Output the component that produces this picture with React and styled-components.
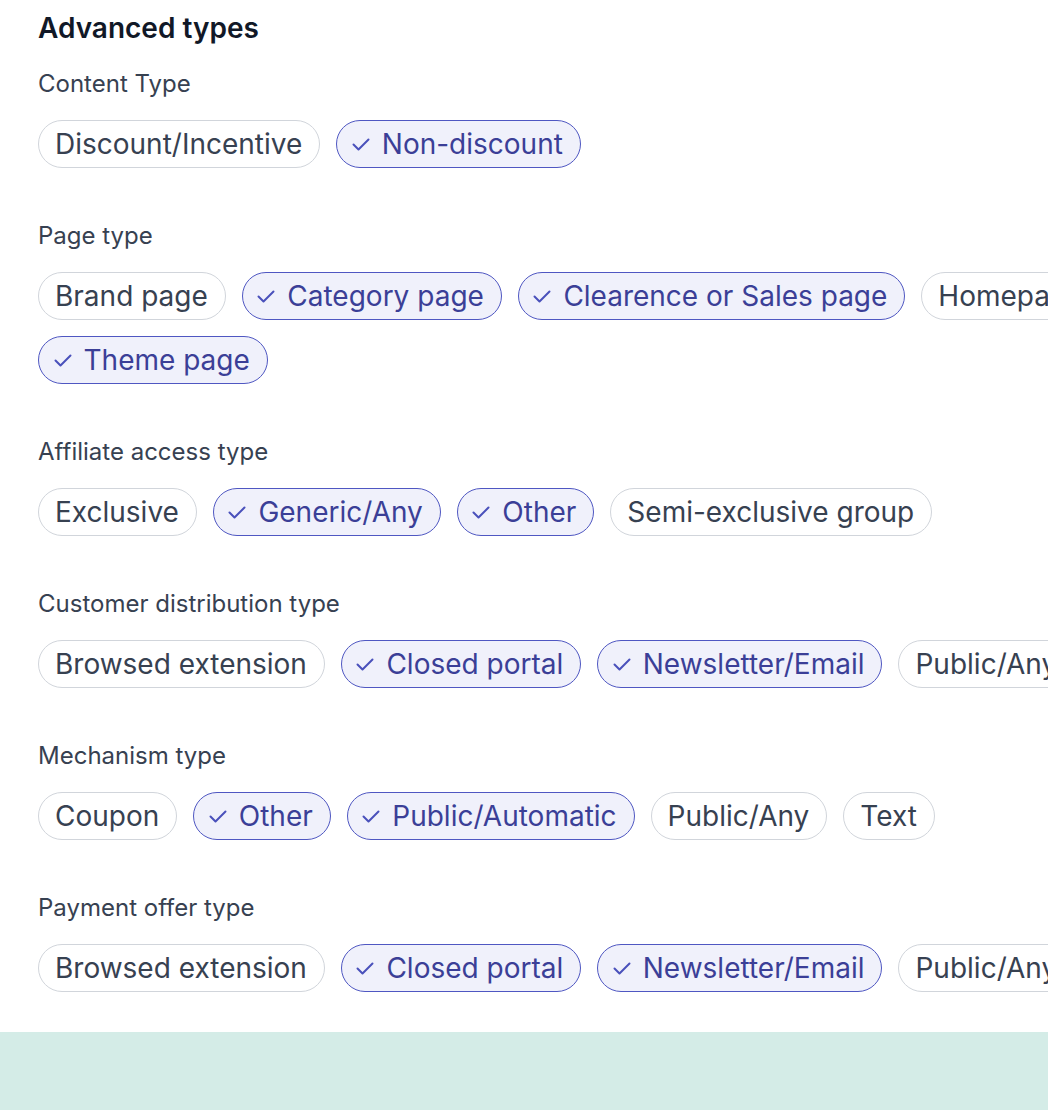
import React from 'react'
import styled, { createGlobalStyle } from 'styled-components'

// #111827 --> heading
// #374151 --> body text
// #4f57c2 --> selected border
// #f0f1fb --> selected fill

const GlobalStyle = createGlobalStyle`
  html, body {
    margin: 0;
    padding: 0;
    background: #fff;
    overflow: hidden;
  }
  body {
    font-family: Inter, "Noto Sans", "Liberation Sans", sans-serif;
    -webkit-font-smoothing: antialiased;
  }
`

const Page = styled.div`
  width: 1048px;
  overflow: hidden;
`

const Panel = styled.section`
  padding: 8px 0 40px 38px;
`

const Title = styled.h2`
  margin: 0;
  font-size: 28px;
  line-height: 40px;
  font-weight: 600;
  color: #111827;
`

const Group = styled.div`
  margin-top: ${({ first }) => (first ? '20px' : '52px')};
`

const Label = styled.div`
  font-size: 24px;
  line-height: 32px;
  font-weight: 400;
  color: #374151;
`

/* wider than the viewport on purpose: the reference clips the last chips */
const ChipRow = styled.div`
  display: flex;
  flex-wrap: wrap;
  gap: 16px;
  width: 1250px;
  margin-top: 20px;
`

const Chip = styled.span`
  display: inline-flex;
  align-items: center;
  flex-shrink: 0;
  height: 48px;
  box-sizing: border-box;
  padding: ${({ on }) => (on ? '0 17px 0 14.5px' : '0 17px 0 16px')};
  gap: 12px;
  border-radius: 999px;
  border: 1.5px solid ${({ on }) => (on ? '#4f57c2' : '#d1d5db')};
  background: ${({ on }) => (on ? '#f0f1fb' : '#fff')};
  color: ${({ on }) => (on ? '#3b3f97' : '#374151')};
  font-size: 28px;
  font-weight: 400;
  white-space: nowrap;
`

const Check = () => (
  <svg width="18" height="13" viewBox="0 0 18 13" fill="none">
    <path d="M1.5 6.5l5 5 10-10" stroke="#4a51bb" strokeWidth="2" strokeLinecap="round" strokeLinejoin="round" />
  </svg>
)

const Footer = styled.div`
  height: 80px;
  background: #d4ece7;
`

const groups = [
  { label: 'Content Type', items: [['Discount/Incentive', false], ['Non-discount', true]] },
  {
    label: 'Page type',
    items: [
      ['Brand page', false],
      ['Category page', true],
      ['Clearence or Sales page', true],
      ['Homepage', false],
      ['Theme page', true],
    ],
  },
  {
    label: 'Affiliate access type',
    items: [['Exclusive', false], ['Generic/Any', true], ['Other', true], ['Semi-exclusive group', false]],
  },
  {
    label: 'Customer distribution type',
    items: [['Browsed extension', false], ['Closed portal', true], ['Newsletter/Email', true], ['Public/Any', false]],
  },
  {
    label: 'Mechanism type',
    items: [['Coupon', false], ['Other', true], ['Public/Automatic', true], ['Public/Any', false], ['Text', false]],
  },
  {
    label: 'Payment offer type',
    items: [['Browsed extension', false], ['Closed portal', true], ['Newsletter/Email', true], ['Public/Any', false]],
  },
]

export default function App() {
  return (
    <Page>
      <GlobalStyle />
      <Panel>
        <Title>Advanced types</Title>
        {groups.map((g, i) => (
          <Group key={g.label} first={i === 0}>
            <Label>{g.label}</Label>
            <ChipRow>
              {g.items.map(([text, on]) => (
                <Chip key={text} on={on}>
                  {on && <Check />}
                  {text}
                </Chip>
              ))}
            </ChipRow>
          </Group>
        ))}
      </Panel>
      <Footer />
    </Page>
  )
}
